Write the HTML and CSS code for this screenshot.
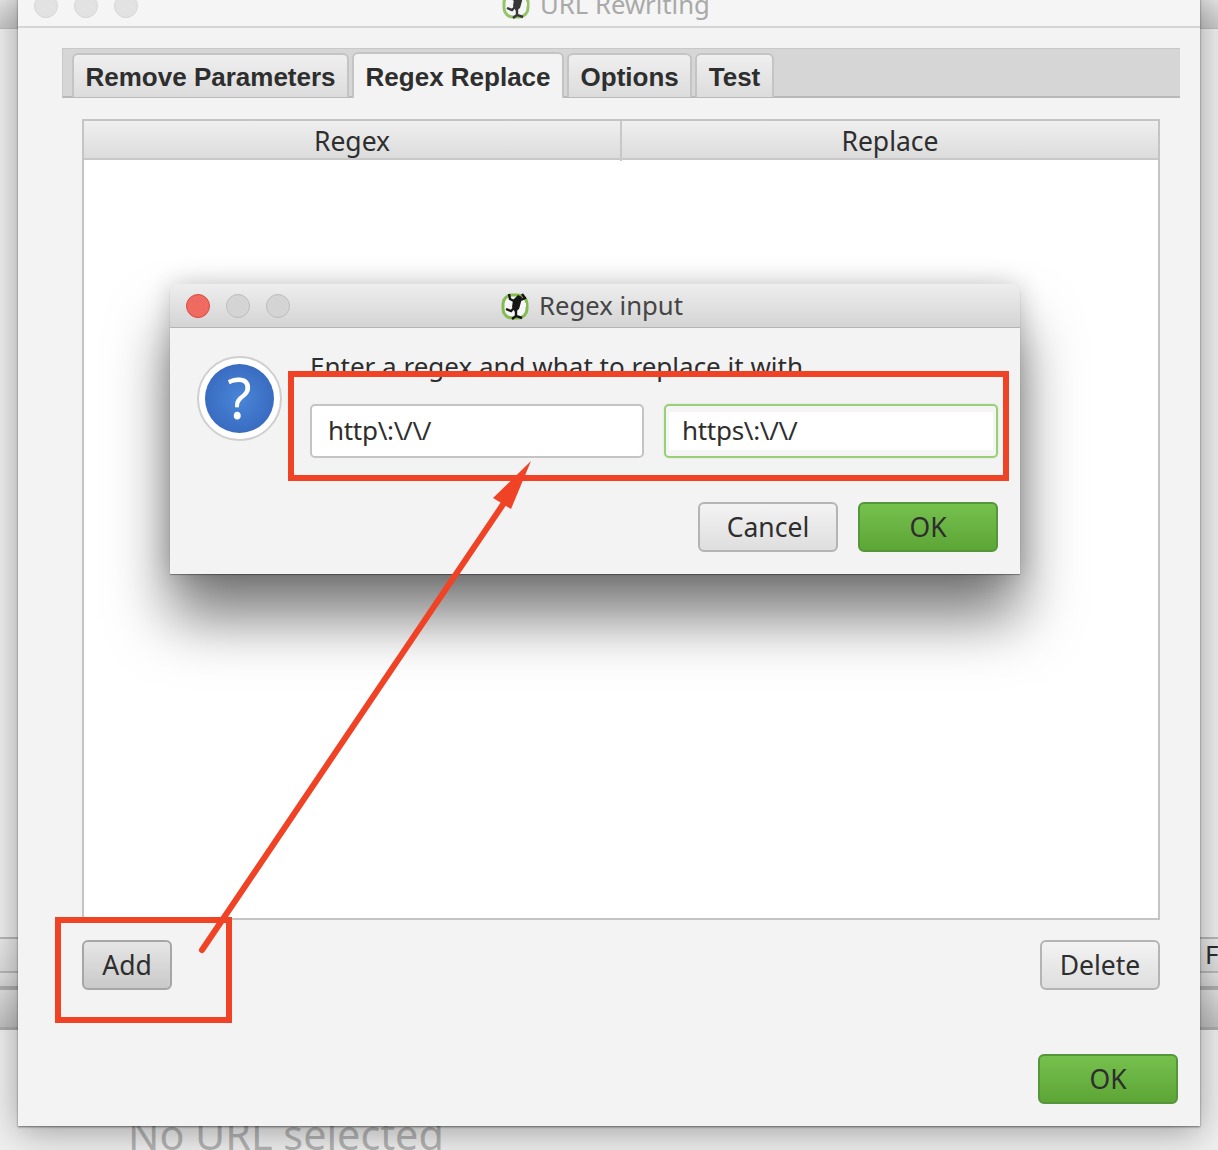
FILE: index.html
```html
<!DOCTYPE html>
<html lang="en">
<head>
<meta charset="utf-8">
<title>URL Rewriting</title>
<link rel="stylesheet" href="styles.css">
</head>
<body>
<div class="desktop">
  <div class="backdrop">
    <div class="bg-topbar"></div>
    <div class="bg-row">F</div>
    <div class="bg-gap"></div>
    <div class="bg-bar"></div>
    <div class="bg-status">No URL selected</div>
  </div>

  <section class="window main-window">
    <header class="titlebar inactive">
      <div class="lights">
        <span class="light"></span><span class="light"></span><span class="light"></span>
      </div>
      <div class="title">
        <svg class="frog faded" viewBox="0 0 28 28"><use href="#frog"/></svg>
        <span>URL Rewriting</span>
      </div>
    </header>
    <div class="main-body">
      <nav class="tabs">
        <span class="tab">Remove Parameters</span>
        <span class="tab active">Regex Replace</span>
        <span class="tab">Options</span>
        <span class="tab">Test</span>
      </nav>
      <div class="panel">
        <div class="table">
          <div class="table-head">
            <div class="th">Regex</div>
            <div class="th">Replace</div>
          </div>
        </div>
        <div class="row-actions">
          <button class="btn btn-add">Add</button>
          <button class="btn btn-delete">Delete</button>
        </div>
      </div>
      <div class="main-footer">
        <button class="btn btn-ok btn-main-ok">OK</button>
      </div>
    </div>
  </section>

  <section class="window dialog">
    <header class="titlebar">
      <div class="lights">
        <span class="light close"></span><span class="light"></span><span class="light"></span>
      </div>
      <div class="title">
        <svg class="frog" viewBox="0 0 28 28"><use href="#frog"/></svg>
        <span>Regex input</span>
      </div>
    </header>
    <div class="dialog-body">
      <div class="question"><span class="question-disc">?</span></div>
      <div class="dialog-main">
        <p class="prompt">Enter a regex and what to replace it with</p>
        <div class="fields">
          <div class="field">http\:\/\/</div>
          <div class="field focused">https\:\/\/</div>
        </div>
        <div class="dialog-actions">
          <button class="btn btn-cancel">Cancel</button>
          <button class="btn btn-ok btn-dialog-ok">OK</button>
        </div>
      </div>
    </div>
  </section>

  <svg class="annotations" viewBox="0 0 1218 1150" width="1218" height="1150">
    <defs>
      <g id="frog">
        <rect x="2" y="3" width="24" height="23" rx="9" fill="#f7f7f7" stroke="#86bb52" stroke-width="3"/>
        <path d="M8 2 L9 7 L13 9 M21 2 L24 6 L20 8 M5 17 L10 19 L14 15 M15 18 L15 24 L21 26 M15 24 L11 27" fill="none" stroke="#161616" stroke-width="2.4"/>
        <path d="M12 8 L17 3 L21 5 L20 10 L18 17 L14 20 L11 15 Z" fill="#161616"/>
        <rect x="20" y="11" width="5" height="4" fill="#f7f7f7"/>
      </g>
    </defs>
    <rect class="mark" x="291" y="374" width="715" height="104"/>
    <rect class="mark" x="58" y="920" width="171" height="100"/>
    <line class="arrow-line" x1="202" y1="950" x2="506" y2="500"/>
    <polygon class="arrow-head" points="531,461 511,509 503,504 493,498"/>
  </svg>
</div>
</body>
</html>
```
FILE: styles.css
```css
* { box-sizing: border-box; }
html, body { margin: 0; padding: 0; }
body {
  width: 1218px;
  height: 1150px;
  overflow: hidden;
  font-family: "Noto Sans", "Open Sans", sans-serif;
  color: #2e2e2e;
  background: #ececec;
}
.desktop {
  position: relative;
  width: 1218px;
  height: 1150px;
  overflow: hidden;
}

/* window behind */
.backdrop {
  position: absolute;
  inset: 0;
  display: flex;
  flex-direction: column;
  background: #f0f0f0;
}
.backdrop > div { flex: none; }
.bg-topbar {
  height: 29px;
  background: linear-gradient(#e6e6e6, #c9c9c9);
  border-bottom: 1px solid #bdbdbd;
}
.bg-row {
  margin-top: 908px;
  height: 36px;
  padding-left: 1205px;
  font-size: 26px;
  line-height: 30px;
  white-space: nowrap;
  background: linear-gradient(#ebebeb, #dddddd);
  border-top: 2px solid #b8b8b8;
  border-bottom: 2px solid #b8b8b8;
}
.bg-gap { height: 13px; background: linear-gradient(#e4e4e4, #d6d6d6); }
.bg-bar {
  height: 44px;
  background: linear-gradient(#dfdfdf, #c0c0c0);
  border-top: 4px solid #adadad;
  border-bottom: 3px solid #adadad;
}
.bg-status {
  margin-top: 80px;
  padding-left: 128px;
  font-size: 41.3px;
  line-height: 48px;
  color: #b4b4b4;
  white-space: nowrap;
}

/* windows */
.window {
  position: absolute;
  background: #f3f3f3;
  display: flex;
  flex-direction: column;
}
.main-window {
  left: 18px;
  top: -16px;
  width: 1182px;
  height: 1142px;
  box-shadow: 0 6px 34px rgba(0, 0, 0, .34), 0 1px 2px rgba(0, 0, 0, .5);
}
.dialog {
  left: 170px;
  top: 284px;
  width: 850px;
  height: 290px;
  border-radius: 8px 8px 0 0;
  box-shadow: 0 44px 60px rgba(0, 0, 0, .52), 0 0 26px rgba(0, 0, 0, .2), 0 1px 1px rgba(0, 0, 0, .35);
}

.titlebar {
  position: relative;
  flex: none;
  height: 44px;
  display: flex;
  align-items: center;
  justify-content: center;
  background: linear-gradient(#eeeeee, #d4d4d4);
  border-bottom: 1px solid #b4b4b4;
  border-radius: 8px 8px 0 0;
  color: #454545;
  font-size: 25.7px;
}
.titlebar.inactive {
  background: #f5f5f5;
  border-bottom: 2px solid #d5d5d5;
  color: #a9a9a9;
  border-radius: 0;
}
.lights {
  position: absolute;
  left: 16px;
  top: 10px;
  display: flex;
  gap: 16px;
}
.light {
  width: 24px;
  height: 24px;
  border-radius: 50%;
  background: #d4d4d4;
  border: 1px solid #bdbdbd;
}
.inactive .light { background: #e2e2e2; border-color: #d6d6d6; }
.light.close { background: #ef6a60; border-color: #d9493f; }
.title {
  display: flex;
  align-items: center;
  gap: 10px;
  margin-left: -6px;
  line-height: 36px;
}
.frog { width: 28px; height: 28px; flex: none; }
.frog.faded { opacity: .85; }

/* main window */
.main-body {
  flex: 1;
  display: flex;
  flex-direction: column;
  padding: 20px 20px 22px 44px;
}
.tabs {
  height: 50px;
  display: flex;
  align-items: flex-end;
  gap: 3px;
  padding-left: 9px;
  background: #d6d6d6;
  border-bottom: 2px solid #b9b9b9;
  border-left: 1px solid #c8c8c8;
  border-top: 1px solid #c8c8c8;
}
.tab {
  height: 44px;
  padding: 0 11.5px;
  margin-bottom: -1px;
  font-family: "Liberation Sans", Arial, sans-serif;
  font-weight: 700;
  font-size: 26px;
  line-height: 44px;
  white-space: nowrap;
  background: linear-gradient(#efefef, #dcdcdc);
  border: 2px solid #c4c4c4;
  border-bottom: 0;
  border-radius: 6px 6px 0 0;
}
.tab.active {
  height: 46px;
  margin-bottom: -2px;
  line-height: 46px;
  background: #f3f3f3;
}
.panel {
  flex: 1;
  display: flex;
  flex-direction: column;
  padding: 21px 20px 0;
}
.table {
  flex: none;
  height: 801px;
  background: #fff;
  border: 2px solid #c4c4c4;
}
.table-head {
  display: grid;
  grid-template-columns: 538px 1fr;
  height: 39px;
  background: linear-gradient(#efefef, #dcdcdc);
  border-bottom: 2px solid #c8c8c8;
}
.th {
  text-align: center;
  font-size: 26.5px;
  line-height: 40px;
  border-right: 2px solid #c8c8c8;
}
.th:last-child { border-right: 0; }
.row-actions {
  display: flex;
  justify-content: space-between;
  margin-top: 20px;
}

/* buttons */
.btn {
  display: block;
  padding: 0;
  height: 50px;
  font-family: inherit;
  font-size: 26.5px;
  line-height: 44px;
  color: #2e2e2e;
  background: linear-gradient(#f3f3f3, #dedede);
  border: 2px solid #b4b4b4;
  border-radius: 6px;
  text-align: center;
}
.btn-add {
  width: 90px;
  background: linear-gradient(#e6e6e6, #c9c9c9);
  border-color: #a6a6a6;
}
.btn-delete { width: 120px; }
.btn-cancel { width: 140px; }
.btn-ok {
  width: 140px;
  background: linear-gradient(#76c04e, #5da636);
  border-color: #55963a;
}
.main-footer {
  display: flex;
  justify-content: flex-end;
  margin-top: auto;
  padding-right: 2px;
}

/* dialog */
.dialog-body {
  flex: 1;
  display: flex;
  padding: 28px 22px 0 27px;
  gap: 28px;
}
.question {
  width: 85px;
  height: 85px;
  flex: none;
  padding: 6px;
  background: #fff;
  border: 2px solid #cfcfcf;
  border-radius: 50%;
}
.question-disc {
  display: block;
  height: 100%;
  border-radius: 50%;
  background: radial-gradient(circle, #4a86d8, #3261b8);
  color: #fff;
  font-size: 56px;
  line-height: 66px;
  text-align: center;
}
.dialog-main { flex: 1; min-width: 0; }
.prompt {
  margin: 0;
  height: 48px;
  font-size: 26px;
  line-height: 20px;
  white-space: nowrap;
}
.fields {
  display: grid;
  grid-template-columns: 334px 334px;
  gap: 20px;
}
.field {
  height: 54px;
  padding: 0 16px;
  font-size: 26px;
  line-height: 48px;
  letter-spacing: -.3px;
  background: #fff;
  border: 2px solid #c4c4c4;
  border-radius: 5px;
}
.field.focused {
  border-color: #98cf78;
  box-shadow: 0 0 2px #c9e6b8, inset 3px 0 0 #f5f5f5, inset -3px 0 0 #f5f5f5, inset 0 6px 0 #f5f5f5, inset 0 -6px 0 #f5f5f5;
}
.dialog-actions {
  display: flex;
  justify-content: flex-end;
  gap: 20px;
  margin-top: 44px;
}

/* annotations over the screenshot */
.annotations {
  position: absolute;
  left: 0;
  top: 0;
  pointer-events: none;
}
.mark { fill: none; stroke: #f04326; stroke-width: 6; }
.arrow-line { stroke: #f04326; stroke-width: 6; stroke-linecap: round; }
.arrow-head { fill: #f04326; }
```
